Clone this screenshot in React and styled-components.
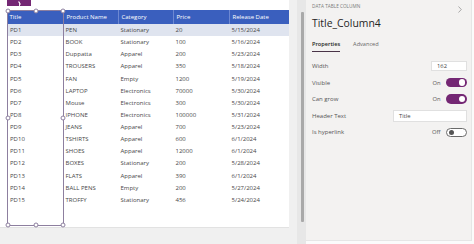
import React from "react";
import styled, { createGlobalStyle } from "styled-components";

const Global = createGlobalStyle`
  html, body { margin: 0; padding: 0; background: #fbfbfb; }
  body { font-family: "Open Sans", "Noto Sans", Arial, sans-serif; }
  * { box-sizing: border-box; }
`;

const Page = styled.div`
  display: flex;
  width: 474px;
  height: 244px;
  overflow: hidden;
  background: #fbfbfb;
`;

const Workspace = styled.div`
  width: 297px;
  height: 244px;
  background: #f0f0f0;
  flex: none;
`;

const Canvas = styled.div`
  position: relative;
  width: 289px;
  height: 228px;
  background: #ffffff;
  border-bottom: 1px solid #e2e2e2;
  padding: 10px 0 0 7px;
`;

const Table = styled.div`
  width: 282px;
  font-size: 6px;
`;

const COLS = "56px 55px 55px 56px 60px";

const HeaderRow = styled.div`
  display: grid;
  grid-template-columns: ${COLS};
  height: 14px;
  background: #3a5fbe;
  color: #ffffff;
`;

const HeaderCell = styled.div`
  display: flex;
  align-items: center;
  padding-left: 2.5px;
  border-left: ${(p) => (p.$first ? "none" : "1px solid #6d88d2")};
  white-space: nowrap;
`;

const BodyRow = styled.div`
  display: grid;
  grid-template-columns: ${COLS};
  height: 12.14px;
  background: ${(p) => (p.$selected ? "#dfe4ef" : "transparent")};
  color: #474747;
`;

const Cell = styled.div`
  display: flex;
  align-items: center;
  padding-left: ${(p) => (p.$first ? "3px" : "2.5px")};
  white-space: nowrap;
`;

const Selection = styled.div`
  position: absolute;
  left: 7px;
  top: 10px;
  width: 57px;
  height: 216px;
  border: 1px solid #8d7f9f;
  pointer-events: none;
`;

const Handle = styled.span`
  position: absolute;
  width: 5px;
  height: 5px;
  border-radius: 50%;
  background: #ffffff;
  border: 1px solid #8d7f9f;
  left: ${(p) => p.$x}%;
  top: ${(p) => p.$y}%;
  transform: translate(-50%, -50%);
`;

const Tag = styled.div`
  position: absolute;
  left: 7px;
  top: 0;
  width: 24px;
  height: 6px;
  background: #742774;
  display: flex;
  justify-content: center;
`;

const ScrollTrack = styled.div`
  width: 9px;
  height: 244px;
  background: #e7e7e7;
  padding: 12px 0 0 3.5px;
  flex: none;
`;

const Thumb = styled.div`
  width: 3px;
  height: 210px;
  background: #a9a9a9;
  border-radius: 1px;
`;

const Panel = styled.div`
  width: 166px;
  height: 241px;
  background: #f3f2f1;
  border-right: 1px solid #e6e6e6;
  border-bottom: 1px solid #e6e6e6;
  padding: 0 4px 0 6px;
  flex: none;
`;

const Eyebrow = styled.div`
  display: flex;
  justify-content: space-between;
  height: 14.5px;
`;

const EyebrowText = styled.span`
  font-size: 4.7px;
  line-height: 13.4px;
  color: #7a7a7a;
  letter-spacing: 0;
  text-transform: uppercase;
`;

const Chevron = styled.svg`
  margin-top: 6px;
  margin-right: 5px;
`;

const PanelTitle = styled.div`
  font-size: 10.4px;
  line-height: 16px;
  color: #252525;
`;

const Tabs = styled.div`
  display: flex;
  gap: 13px;
  margin-top: 7.5px;
`;

const Tab = styled.div`
  font-size: 5.6px;
  line-height: 12px;
  padding-bottom: 1px;
  color: ${(p) => (p.$active ? "#252525" : "#666666")};
  font-weight: ${(p) => (p.$active ? 600 : 400)};
  border-bottom: 1.5px solid ${(p) => (p.$active ? "#4a3448" : "transparent")};
`;

const PropList = styled.div`
  margin-top: 5.7px;
`;

const PropRow = styled.div`
  display: flex;
  align-items: center;
  justify-content: space-between;
  height: 16.6px;
`;

const PropLabel = styled.span`
  font-size: 6px;
  color: #555555;
`;

const Controls = styled.div`
  display: flex;
  align-items: center;
  gap: 5px;
`;

const StateText = styled.span`
  font-size: 5.8px;
  color: #555555;
`;

const Input = styled.div`
  width: ${(p) => p.$w}px;
  height: ${(p) => p.$h}px;
  background: #ffffff;
  border: 1px solid #e0e0e0;
  font-size: 5.8px;
  color: #444444;
  display: flex;
  align-items: center;
  padding-left: 5px;
`;

const Toggle = styled.div`
  width: 21.5px;
  height: 9.6px;
  border-radius: 5px;
  background: ${(p) => (p.$on ? "#742774" : "#ffffff")};
  border: ${(p) => (p.$on ? "none" : "1px solid #6a6a6a")};
  display: flex;
  align-items: center;
  justify-content: ${(p) => (p.$on ? "flex-end" : "flex-start")};
  padding: 0 2px;
`;

const Knob = styled.span`
  width: ${(p) => (p.$on ? "6.4px" : "5.4px")};
  height: ${(p) => (p.$on ? "6.4px" : "5.4px")};
  border-radius: 50%;
  background: ${(p) => (p.$on ? "#ffffff" : "#555555")};
`;

const headers = ["Title", "Product Name", "Category", "Price", "Release Date"];

const rows = [
  ["PD1", "PEN", "Stationary", "20", "5/15/2024"],
  ["PD2", "BOOK", "Stationary", "100", "5/16/2024"],
  ["PD3", "Duppatta", "Apparel", "200", "5/23/2024"],
  ["PD4", "TROUSERS", "Apparel", "350", "5/18/2024"],
  ["PD5", "FAN", "Empty", "1200", "5/19/2024"],
  ["PD6", "LAPTOP", "Electronics", "70000", "5/30/2024"],
  ["PD7", "Mouse", "Electronics", "300", "5/30/2024"],
  ["PD8", "IPHONE", "Electronics", "100000", "5/31/2024"],
  ["PD9", "JEANS", "Apparel", "700", "5/23/2024"],
  ["PD10", "TSHIRTS", "Apparel", "600", "6/1/2024"],
  ["PD11", "SHOES", "Apparel", "12000", "6/1/2024"],
  ["PD12", "BOXES", "Stationary", "200", "5/28/2024"],
  ["PD13", "FLATS", "Apparel", "390", "6/1/2024"],
  ["PD14", "BALL PENS", "Empty", "200", "5/27/2024"],
  ["PD15", "TROFFY", "Stationary", "456", "5/24/2024"],
];

const handles = [
  [0, 0], [50, 0], [100, 0],
  [0, 50], [100, 50],
  [0, 100], [50, 100], [100, 100],
];

function Switch({ on }) {
  return (
    <Controls>
      <StateText>{on ? "On" : "Off"}</StateText>
      <Toggle $on={on}>
        <Knob $on={on} />
      </Toggle>
    </Controls>
  );
}

export default function App() {
  return (
    <>
      <Global />
      <Page>
        <Workspace>
          <Canvas>
            <Table>
              <HeaderRow>
                {headers.map((h, i) => (
                  <HeaderCell key={h} $first={i === 0}>{h}</HeaderCell>
                ))}
              </HeaderRow>
              {rows.map((r, i) => (
                <BodyRow key={r[0]} $selected={i === 0}>
                  {r.map((c, j) => (
                    <Cell key={j} $first={j === 0}>{c}</Cell>
                  ))}
                </BodyRow>
              ))}
            </Table>
            <Selection>
              {handles.map(([x, y], i) => (
                <Handle key={i} $x={x} $y={y} />
              ))}
            </Selection>
            <Tag>
              <svg width="6" height="6" viewBox="0 0 6 6">
                <path d="M2 2 L3.5 2 L3.5 6 M3.5 4 L5 4" stroke="#fff" strokeWidth="0.9" fill="none" />
              </svg>
            </Tag>
          </Canvas>
        </Workspace>
        <ScrollTrack>
          <Thumb />
        </ScrollTrack>
        <Panel>
          <Eyebrow>
            <EyebrowText>Data table column</EyebrowText>
            <Chevron width="4" height="7" viewBox="0 0 4 7">
              <path d="M0.5 0.5 L3.3 3.5 L0.5 6.5" stroke="#8a8a8a" strokeWidth="0.7" fill="none" />
            </Chevron>
          </Eyebrow>
          <PanelTitle>Title_Column4</PanelTitle>
          <Tabs>
            <Tab $active>Properties</Tab>
            <Tab>Advanced</Tab>
          </Tabs>
          <PropList>
            <PropRow>
              <PropLabel>Width</PropLabel>
              <Input $w={36} $h={10.5}>162</Input>
            </PropRow>
            <PropRow>
              <PropLabel>Visible</PropLabel>
              <Switch on />
            </PropRow>
            <PropRow>
              <PropLabel>Can grow</PropLabel>
              <Switch on />
            </PropRow>
            <PropRow>
              <PropLabel>Header Text</PropLabel>
              <Input $w={74} $h={12.5}>Title</Input>
            </PropRow>
            <PropRow>
              <PropLabel>Is hyperlink</PropLabel>
              <Switch on={false} />
            </PropRow>
          </PropList>
        </Panel>
      </Page>
    </>
  );
}
